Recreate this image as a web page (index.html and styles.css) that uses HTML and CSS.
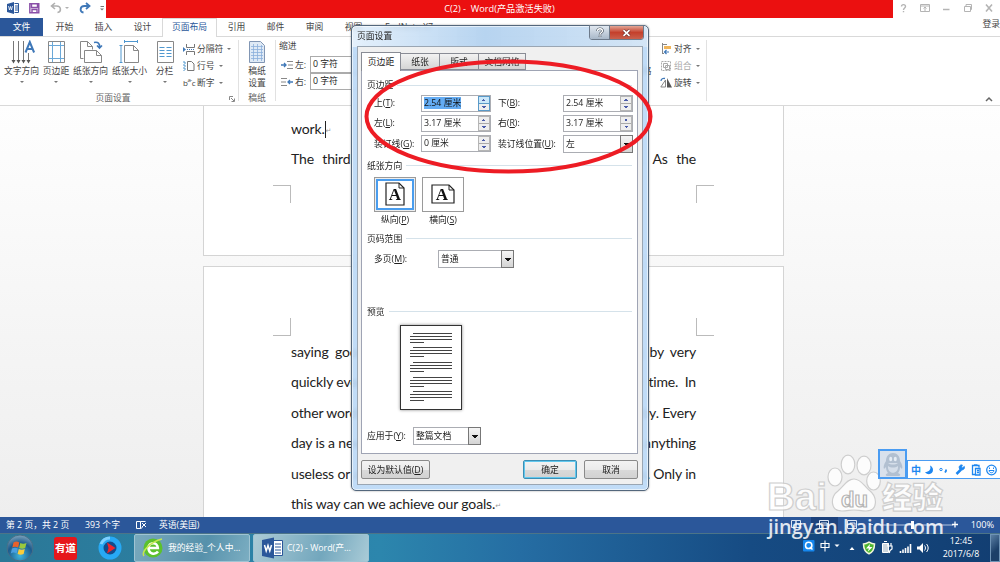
FILE: index.html
```html
<!DOCTYPE html>
<html lang="zh-CN">
<head>
  <meta charset="UTF-8">
  <meta name="viewport" content="width=device-width, initial-scale=1">
  <title>C(2) - Word</title>
  <link rel="stylesheet" href="styles.css">
</head>
<body>
  <header class="title-bar">
    <div class="quick-access">
      <svg width="106" height="18" viewBox="0 0 106 18" fill="none">
        <path d="M7 4l7-2v12l-7-2z" fill="#2b579a"/><path d="M14.500 3.500h4v9h-4M15 6h3M15 8h3M15 10h3" stroke="#2b579a"/>
        <path d="M8.500 6l1 4 1-3.500 1 3.500 1-4" stroke="#fff" stroke-width=".8"/>
        <path d="M29.800 3.800h9v9h-9zM31.500 4v3.500h6V4M32 12.500v-3h5v3" stroke="#8a4fa8" stroke-width="1.400"/>
        <path d="M55 3l-3.500 3 3.500 3M52 6h4.500c5 0 5 6 1 6.500" stroke="#b0b0b0" stroke-width="1.600"/>
        <path d="M65 7h4l-2 2z" fill="#b0b0b0"/>
        <path d="M86 3l3.500 3-3.500 3M89 6h-4.500c-5 0-5 6-1 6.500" stroke="#3f78b8" stroke-width="1.800"/>
        <path d="M100.500 6.500h3.500" stroke="#777"/><path d="M100 8.500h4l-2 2z" fill="#777"/>
      </svg>
    </div>
    <div class="title-text">C(2) -&nbsp; Word(产品激活失败)</div>
    <div class="window-tools">
      <svg width="107" height="18" viewBox="0 0 107 18" fill="none" stroke="#b4b4b4">
        <path d="M8.500 6.500c0-2.500 4-2.500 4 0 0 1.500-2 1.500-2 3.500M10.500 11v1.300" stroke-width="1.400"/>
        <path d="M27.500 4.500h9v7h-9zM27.500 6h9M32 7v4M30.500 8.500L32 7l1.500 1.500"/>
        <path d="M50 9.500h6.500" stroke-width="1.500"/>
        <path d="M71.500 6.500h6v5h-6zM73 6V4.500h5.500v5H78"/>
        <path d="M93 4.500l6 7M99 4.500l-6 7" stroke-width="1.600"/>
      </svg>
    </div>
  </header>

  <nav class="tabs">
    <div class="tab file">文件</div>
    <div class="tab">开始</div>
    <div class="tab">插入</div>
    <div class="tab">设计</div>
    <div class="tab active">页面布局</div>
    <div class="tab">引用</div>
    <div class="tab">邮件</div>
    <div class="tab">审阅</div>
    <div class="tab">视图</div>
    <div class="tab wide">EndNote X7</div>
    <div class="login">登录</div>
  </nav>

  <section class="ribbon">
    <div class="group page-setup">
      <div class="group-body">
        <div class="big-btn w36">
          <svg width="28" height="25" viewBox="0 0 28 25" fill="none">
            <path d="M5.500 1v20M10.500 1v20M15.500 1v20M20.500 13v8" stroke="#777"/>
            <path d="M3.500 20h4l-2 3.500zM8.500 20h4l-2 3.500zM13.500 20h4l-2 3.500zM18.500 20h4l-2 3.500z" fill="#555"/>
            <path d="M17.500 12.500L21.800 2l4.300 10.500M19 9h6" stroke="#3f78b8" stroke-width="2"/>
          </svg>
          <span>文字方向</span><i class="caret"></i>
        </div>
        <div class="big-btn w34">
          <svg width="20" height="25" viewBox="0 0 20 25" fill="none">
            <path d="M2.500 1.500h16v21h-16z" stroke="#888"/>
            <path d="M6.500 2v20M14.500 2v20M3 5.500h15M3 18.500h15" stroke="#6aa8d8"/>
          </svg>
          <span>页边距</span><i class="caret"></i>
        </div>
        <div class="big-btn w36">
          <svg width="26" height="25" viewBox="0 0 26 25" fill="none" stroke="#888">
            <path d="M5.500 18.500h-3v-17h7l5 5v3M9.500 1.500v5h5"/>
            <path d="M6.500 22.500v-12h12l5 5v7zM18.500 10.500v5h5" fill="#fff"/>
            <path d="M16 2.500c4-1 6 1 5.500 5M19 5.500l2.500 2.500L24 5.500" stroke="#3f78b8" stroke-width="1.600"/>
          </svg>
          <span>纸张方向</span><i class="caret"></i>
        </div>
        <div class="big-btn w41">
          <svg width="22" height="25" viewBox="0 0 22 25" fill="none">
            <path d="M5.500 22.500v-17h9l5 5v12zM14.500 5.500v5h5" stroke="#888"/>
            <path d="M5 1.500h14M5.500 0v3M18.500 0v3M2 5v17.500M.5 5.500h3M.5 22.500h3" stroke="#4f97cf"/>
          </svg>
          <span>纸张大小</span><i class="caret"></i>
        </div>
        <div class="big-btn w28">
          <svg width="20" height="25" viewBox="0 0 20 25" fill="none">
            <path d="M2.500 1.500h16v21h-16z" stroke="#888"/>
            <path d="M4.500 7.500h5M4.500 10.500h5M4.500 13.500h5M4.500 16.500h5M11.500 7.500h5M11.500 10.500h5M11.500 13.500h5M11.500 16.500h5" stroke="#4f97cf" stroke-width="1.200"/>
          </svg>
          <span>分栏</span><i class="caret"></i>
        </div>
        <div class="small-list">
          <div>
            <svg width="12" height="12" viewBox="0 0 12 12" fill="none"><path d="M3.500 1v3.500h8V1M3.500 12V8.500h8V12" stroke="#777"/><path d="M0 4v5l3-2.500z" fill="#3f78b8"/><path d="M4 6.500h8" stroke="#3f78b8" stroke-dasharray="1 1"/></svg>
            分隔符<i class="caret"></i>
          </div>
          <div>
            <svg width="12" height="12" viewBox="0 0 12 12" fill="none"><path d="M4.500 1.500h4l2.500 2.500v6.500H4.500z" stroke="#777"/><path d="M1 1v10M2 2v9" stroke="#4f97cf" stroke-dasharray="2 1"/></svg>
            行号<i class="caret"></i>
          </div>
          <div>
            <span class="hyphen">b<sup>a-</sup>c</span>
            断字<i class="caret"></i>
          </div>
        </div>
      </div>
      <div class="group-name">页面设置
        <svg class="launcher" width="6" height="6" viewBox="0 0 6 6" fill="none" stroke="#888"><path d="M.5 4V.5H4M2 2l3 3M5.500 2.500v3h-3"/></svg>
      </div>
    </div>
    <div class="group manuscript">
      <div class="group-body">
        <div class="big-btn two-line">
          <svg width="20" height="25" viewBox="0 0 20 25" fill="none">
            <path d="M2.500 1.500h11l4 4v17h-15z" fill="#dfeaf6" stroke="#8196b4"/>
            <path d="M4 6.500h12M4 9.500h12M4 12.500h12M4 15.500h12M4 18.500h12M6.500 4v17M10.500 4v17M14.500 5v16" stroke="#8bb0dc" stroke-width=".8"/>
          </svg>
          <span>稿纸<br>设置</span>
        </div>
      </div>
      <div class="group-name">稿纸</div>
    </div>
    <div class="group indent">
      <div>缩进</div>
      <div class="indent-row">
        <svg width="12" height="10" viewBox="0 0 12 10" fill="none"><path d="M6 1.500h6M7 5h5M6 8.500h6" stroke="#888"/><path d="M0 5h5M3 3l2 2-2 2" stroke="#3f78b8" stroke-width="1.300"/></svg>
        左:<span class="field">0 字符</span>
      </div>
      <div class="indent-row">
        <svg width="12" height="10" viewBox="0 0 12 10" fill="none"><path d="M0 1.500h6M0 5h5M0 8.500h6" stroke="#888"/><path d="M12 5H7M9 3L7 5l2 2" stroke="#3f78b8" stroke-width="1.300"/></svg>
        右:<span class="field">0 字符</span>
      </div>
    </div>
    <div class="group arrange">
      <div class="pane-label">窗格</div>
      <div class="small-list">
        <div>
          <svg width="12" height="12" viewBox="0 0 12 12" fill="none"><path d="M2.500 0v11M2 1.500h5M2 10.500h2" stroke="#888"/><path d="M4 3h7v3H4z" fill="#f0b55a"/><path d="M9 9H4.500M6.500 7l-2 2 2 2" stroke="#3f78b8" stroke-width="1.200"/></svg>
          对齐<i class="caret"></i>
        </div>
        <div class="disabled">
          <svg width="12" height="12" viewBox="0 0 12 12" fill="none" stroke="#aaa"><path d="M1.500 1.500h9v9h-9z" stroke-dasharray="2 1"/><path d="M3.500 3.500h4v4h-4zM5.500 5.500h4v4h-4z"/></svg>
          组合<i class="caret"></i>
        </div>
        <div>
          <svg width="12" height="12" viewBox="0 0 12 12" fill="none"><path d="M5.500 3v7H.8z" stroke="#888"/><path d="M7 1v9.500h5z" fill="#555"/><path d="M1 4c0-2 2-3 4-2.500" stroke="#3f78b8" stroke-width="1.300"/></svg>
          旋转<i class="caret"></i>
        </div>
      </div>
    </div>
    <svg class="collapse" width="8" height="6" viewBox="0 0 8 6" fill="none" stroke="#666" stroke-width="1.500"><path d="M1 5l3-3 3 3"/></svg>
  </section>

  <main class="workspace">
    <article class="page first">
      <p class="line">work.<span class="cursor"></span><span class="mark">↵</span></p>
      <p class="line loose"><span>The third</span><span>. As the</span></p>
      <div class="corners bottom"><i></i><i></i></div>
    </article>
    <article class="page second">
      <div class="corners top"><i></i><i></i></div>
      <p class="line mid"><span>saying good</span><span>g by very</span></p>
      <p class="line"><span>quickly even</span><span class="gap">r time. In</span></p>
      <p class="line"><span>other words</span><span>by. Every</span></p>
      <p class="line"><span>day is a new</span><span>anything</span></p>
      <p class="line"><span>useless or a</span><span>s. Only in</span></p>
      <p class="line">this way can we achieve our goals.<span class="mark">↵</span></p>
    </article>
  </main>

  <footer class="status-bar">
    <span class="pages">第 2 页，共 2 页</span>
    <span class="words">393 个字</span>
    <svg class="proof" width="12" height="10" viewBox="0 0 12 10" fill="none" stroke="#fff"><path d="M5.500 1.500h-4v7h4zM5.500 1.500h5M5.500 8.500l2-1M7 3l4 4M11 3L7 7"/></svg>
    <span>英语(美国)</span>
    <div class="zoom-tools">
      <svg width="170" height="16" viewBox="0 0 170 16" fill="none" stroke="#dbe5f3">
        <path d="M20 0h27v16H20z" fill="#1d427c" stroke="none"/>
        <path d="M.5 3.500H5v7H.5zM5 3.500h4.500v7H5zM28.500 3.500h9v8h-9zM30 6h6M30 8h6M56.500 3.500h9v8h-9zM59 6h5v4"/>
        <path d="M78 7.500h4M84 8h78" stroke="#b5c6df"/>
        <path d="M120 4h3v8h-3z" fill="#fff" stroke="none"/>
        <path d="M161 7.500h6M164 4.500v6" stroke="#fff" stroke-width="1.300"/>
      </svg>
      <span>100%</span>
    </div>
  </footer>

  <div class="taskbar">
    <svg class="start" width="28" height="28" viewBox="0 0 28 28">
      <defs><radialGradient id="orb" cx=".5" cy=".8" r=".8"><stop offset="0" stop-color="#3fb4dc"/><stop offset=".6" stop-color="#1c5a8c"/><stop offset="1" stop-color="#7fa4bd"/></radialGradient></defs>
      <circle cx="14" cy="14" r="13" fill="url(#orb)" stroke="#476f88"/>
      <path d="M7.500 8.500c2-1.200 4-1.200 5.800 0l-1.200 5c-2-1-4-1-5.800 0z" fill="#e8622c"/>
      <path d="M14.300 9c2 1 4 1 6.200 0l-1.300 5c-2 1-4 1-6 0z" fill="#9ac83c"/>
      <path d="M6 14.500c2-1 4-1 5.800 0l-1.200 5c-2-1.200-4-1.200-5.800 0z" fill="#4a9fe0"/>
      <path d="M12.800 15c2 1 4 1 6 0l-1.200 5c-2 1-4 1-6 0z" fill="#fbcc3a"/>
    </svg>
    <div class="youdao">有道</div>
    <svg class="player" width="24" height="24" viewBox="0 0 24 24"><circle cx="12" cy="12" r="9" fill="#124c8c" stroke="#27a9f5" stroke-width="5"/><path d="M3 8a10 10 0 0 1 9-6" stroke="#7fd0ff" stroke-width="3" fill="none"/><path d="M9 6.500l8.500 5.500L9 17.500l1.500-5.500z" fill="#f0252d"/></svg>
    <div class="task">
      <svg width="22" height="24" viewBox="0 0 22 24" fill="none"><circle cx="11" cy="12" r="9.500" fill="#5cc12c"/><path d="M16 15.500c-3 4-9.500 2.500-9.500-3.500S15.500 5.500 15.800 12H7" stroke="#fff" stroke-width="2.600"/><path d="M2 20c-3-4 6-14 18-17" stroke="#c4e84f" stroke-width="1.500"/></svg>
      <span>我的经验_个人中...</span>
    </div>
    <div class="task current">
      <svg width="23" height="22" viewBox="0 0 23 22" fill="none"><path d="M12 3.500h9.500v15H12" fill="#fff" stroke="#2b579a"/><path d="M14 7h6M14 10h6M14 13h6M14 16h6" stroke="#2b579a"/><path d="M1 3l12-2.500v21L1 19z" fill="#2b579a"/><path d="M3.500 8l1.700 6L7 8.500 8.800 14l1.700-6" stroke="#fff" stroke-width="1.500"/></svg>
      <span>C(2) - Word(产...</span>
    </div>
    <div class="tray">
      <svg width="130" height="20" viewBox="0 0 130 20" fill="none">
        <rect x="1" y="2" width="11.500" height="11.500" rx="1" fill="#1687ee"/><circle cx="6.700" cy="7.400" r="3.200" stroke="#fff" stroke-width="1.500"/><path d="M8 9l2.500 2.500" stroke="#fff" stroke-width="1.500"/>
        <path d="M19 5.500h8v4h-8zM23 2.500v11" stroke="#fff" stroke-width="1.100"/>
        <path d="M32.500 6.500h5l-2.500 2.500zM47.500 12h5l-2.500-3z" fill="#fff"/>
        <path d="M61.500 6c3 0 4-1 5.500-2 1.500 1 2.500 2 5.500 2 0 5-1.500 8-5.500 9.800C63 14 61.500 11 61.500 6z" fill="#4cb52e" stroke="#f2f6dc" stroke-width="1.500"/><path d="M68 6l-4 4.500h3l-1.500 3.500 5-5h-3z" fill="#fff"/>
        <path d="M80.500 5.500h6v9h-6zM82 3.500h3" fill="#cdd7df" stroke="#fff"/><path d="M85 8h5v3c-2 1-3 2-2.500 4M86 8V5M89 8V5" stroke="#fff" stroke-width="1.200"/>
        <path d="M98.500 15v-2M101 15v-3.500M103.500 15v-5M106 15V8.500M108.500 15V6" stroke="#fff" stroke-width="1.600"/>
        <path d="M115 8.500h2.500L121 5v10l-3.500-3.500H115z" fill="#fff"/><path d="M122.500 7.500c1.300 1.500 1.300 3.500 0 5M124.500 6c2.200 2.500 2.200 5.500 0 8" stroke="#fff"/>
      </svg>
    </div>
    <div class="clock">12:45<br>2017/6/8</div>
    <div class="show-desktop"></div>
  </div>

  <div class="dialog">
    <div class="dialog-title">页面设置</div>
    <div class="dialog-controls">
      <div class="help"><svg width="20" height="13" viewBox="0 0 20 13" fill="none"><path d="M7.500 5c0-3 5-3 5 0 0 1.500-2.500 1.500-2.500 3.500M10 9.500v1.500" stroke="#4a5560" stroke-width="2.600"/><path d="M7.500 5c0-3 5-3 5 0 0 1.500-2.500 1.500-2.500 3.500M10 9.500v1.300" stroke="#fff" stroke-width="1.300"/></svg></div>
      <div class="close"><svg width="9" height="8" viewBox="0 0 9 8"><path d="M1.500 1.200l6 5.600M7.500 1.200l-6 5.600" stroke="#6b3030" stroke-width="3"/><path d="M1.500 1.200l6 5.600M7.500 1.200l-6 5.600" stroke="#fff" stroke-width="1.700"/></svg></div>
    </div>
    <div class="dialog-body">
      <div class="dialog-tabs">
        <div class="dtab on">页边距</div>
        <div class="dtab">纸张</div>
        <div class="dtab">版式</div>
        <div class="dtab last">文档网格</div>
      </div>
      <div class="panel">
        <div class="legend">页边距</div>
        <div class="margins">
          <label>上(<u>T</u>):</label>
          <div class="spin focus"><span><mark>2.54 厘米</mark></span><b></b></div>
          <label>下(<u>B</u>):</label>
          <div class="spin"><span>2.54 厘米</span><b></b></div>
          <label>左(<u>L</u>):</label>
          <div class="spin"><span>3.17 厘米</span><b></b></div>
          <label>右(<u>R</u>):</label>
          <div class="spin"><span>3.17 厘米</span><b></b></div>
          <label>装订线(<u>G</u>):</label>
          <div class="spin"><span>0 厘米</span><b></b></div>
          <label>装订线位置(<u>U</u>):</label>
          <div class="select"><span>左</span><b></b></div>
        </div>
        <div class="legend orientation-legend">纸张方向</div>
        <div class="orientation">
          <div>
            <div class="orient-box selected">
              <svg width="20" height="24" viewBox="0 0 20 24"><path d="M1 1h13l5 5v17H1z" fill="#fff" stroke="#222" stroke-width="1.200"/><path d="M14 1v5h5" fill="none" stroke="#222"/><text x="10" y="18" text-anchor="middle">A</text></svg>
            </div>
            <span>纵向(<u>P</u>)</span>
          </div>
          <div>
            <div class="orient-box">
              <svg width="24" height="20" viewBox="0 0 24 20"><path d="M1 1h17l5 5v13H1z" fill="#fff" stroke="#222" stroke-width="1.200"/><path d="M18 1v5h5" fill="none" stroke="#222"/><text x="11" y="15.500" text-anchor="middle">A</text></svg>
            </div>
            <span>横向(<u>S</u>)</span>
          </div>
        </div>
        <div class="legend">页码范围</div>
        <div class="multi-page">
          <label>多页(<u>M</u>):</label>
          <div class="select"><span>普通</span><b></b></div>
        </div>
        <div class="legend preview-legend">预览</div>
        <div class="preview">
          <div class="para"><i></i><i></i><i></i><i></i></div>
          <div class="para"><i></i><i></i><i></i><i></i></div>
          <div class="para"><i></i><i></i><i></i><i></i></div>
          <div class="para"><i></i><i></i><i></i><i></i></div>
          <div class="para"><i></i><i></i><i></i><i></i></div>
        </div>
        <div class="apply">
          <label>应用于(<u>Y</u>):</label>
          <div class="select"><span>整篇文档</span><b></b></div>
        </div>
      </div>
      <div class="buttons">
        <button class="default-btn">设为默认值(<u>D</u>)</button>
        <button class="ok">确定</button>
        <button>取消</button>
      </div>
    </div>
  </div>

  <svg class="annotation" width="300" height="124" viewBox="0 0 300 124"><ellipse cx="148.500" cy="61.500" rx="142" ry="55" fill="none" stroke="#ed1c24" stroke-width="4"/></svg>

  <svg class="watermark" width="190" height="90" viewBox="0 0 190 90">
    <g fill="#fff" stroke="#c9c9c9" stroke-width="1.200">
      <ellipse cx="95" cy="29" rx="7" ry="9"/>
      <ellipse cx="108" cy="16.500" rx="6.800" ry="9.300"/>
      <ellipse cx="124" cy="17.500" rx="7" ry="9.300"/>
      <ellipse cx="133.500" cy="33" rx="6.800" ry="9"/>
      <path d="M114 31c7 0 10 7 15 11 9 7 9 21-3 21-5 0-8-1-12-1s-7 1-12 1c-12 0-12-14-4-20 6-5 9-12 16-12z"/>
      <text class="bai" x="27" y="62" textLength="60" lengthAdjust="spacingAndGlyphs">Bai</text>
      <text class="jy" x="142" y="60" textLength="61" lengthAdjust="spacingAndGlyphs">经验</text>
      <text class="du" x="101" y="59">du</text>
    </g>
    <text class="url" x="28" y="86" textLength="176" lengthAdjust="spacingAndGlyphs">jingyan.baidu.com</text>
  </svg>

  <div class="ime">
    <div class="penguin">
      <svg width="24" height="26" viewBox="0 0 24 26"><path d="M12 1c4 0 7 3 7 8 2 3 3 6 2 8l-2-2c0 3-1 5-2 6 3 1 3 3 0 3h-10c-3 0-3-2 0-3-1-1-2-3-2-6l-2 2c-1-2 0-5 2-8 0-5 3-8 7-8z" fill="#b2c0d1"/><ellipse cx="9.700" cy="7" rx="1.500" ry="2.200" fill="#e6edf5"/><ellipse cx="14.300" cy="7" rx="1.500" ry="2.200" fill="#e6edf5"/><path d="M7 11c3 2 7 2 10 0M7 14c-1 9 11 9 10 0-3 2-7 2-10 0z" fill="#d5deea"/></svg>
    </div>
    <div class="ime-bar">
      <span>中</span>
      <svg width="82" height="16" viewBox="0 0 82 16" fill="none" stroke="#1e87f0">
        <path d="M9 3.500c1.500 4-1 6.500-5 6.500 3 4 8 2 8-2 0-2-1-3.500-3-4.500z" fill="#1e87f0" stroke="none"/>
        <circle cx="20" cy="7.500" r="1.200"/><path d="M25 7.500v1.500l-1 1.500" stroke-width="1.800"/>
        <path d="M35.500 12l4.500-4.500" stroke-width="2.500"/><path d="M43.300 4.500c1 3-3 4.500-4.500 2.500s0-4.500 2.500-4L40.500 5l1 1z" fill="#1e87f0"/>
        <path d="M54 12.500h-2.500v-9H58v2M53 3h3.500M54.500 6.500h4.500v6.500h-4.500zM56 8.500h2M56 10.500h2" stroke-width="1.300"/>
        <circle cx="70.500" cy="8" r="4.800" stroke-width="1.300"/><path d="M68 8.500c.5 3 4.500 3 5 0zM68.500 5.500v1.500M72.500 5.500v1.500"/>
      </svg>
    </div>
  </div>
</body>
</html>
```
FILE: styles.css
```css
* {
  box-sizing: border-box;
  margin: 0;
  padding: 0;
}

body {
  width: 1000px;
  height: 562px;
  overflow: hidden;
  position: relative;
  display: flex;
  flex-direction: column;
  background: #fff;
  color: #444;
  font-family: "Open Sans", "Noto Sans CJK SC", sans-serif;
  font-size: 8.8px;
  line-height: 12px;
  white-space: nowrap;
}

svg {
  display: block;
  flex: none;
}

i {
  font-style: normal;
}

/* title bar */
.title-bar {
  height: 18px;
  display: flex;
}

.quick-access {
  width: 106px;
}

.title-text {
  flex: 1;
  background: #eb1010;
  color: #fff;
  text-align: center;
  line-height: 17px;
  font-size: 9.2px;
}

.window-tools {
  width: 107px;
}

/* tabs */
.tabs {
  height: 19px;
  display: flex;
  border-bottom: 1px solid #d9d9d9;
}

.tab {
  width: 39px;
  text-align: center;
  line-height: 18px;
}

.tab.file {
  width: 43px;
  height: 18px;
  margin-right: 2px;
  background: #2b579a;
  color: #fff;
}

.tab.active {
  width: 55px;
  height: 19px;
  border: 1px solid #d9d9d9;
  border-bottom: none;
  background: #fff;
  color: #2b579a;
  line-height: 17px;
}

.tab.wide {
  width: 72px;
}

.login {
  margin-left: auto;
  line-height: 13px;
}

/* ribbon */
.ribbon {
  position: relative;
  height: 69px;
  display: flex;
  border-bottom: 1px solid #d9d9d9;
}

.group {
  margin: 3px 0 4px;
  border-right: 1px solid #e1e1e1;
}

.group-body {
  height: 52px;
  display: flex;
}

.page-setup {
  width: 239px;
  padding-left: 4px;
}

.manuscript {
  width: 37px;
}

.group-name {
  position: relative;
  text-align: center;
  color: #666;
  line-height: 13px;
}

.page-setup .group-name {
  padding-right: 16px;
}

.launcher {
  position: absolute;
  right: 3px;
  top: 4px;
}

.big-btn {
  display: flex;
  flex-direction: column;
  align-items: center;
}

.big-btn span {
  line-height: 12px;
  text-align: center;
}

.w36 { width: 35px; }
.w34 { width: 34px; }
.w41 { width: 43px; }
.w28 { width: 27px; }

.caret {
  display: inline-block;
  border: 2px solid transparent;
  border-top-color: #777;
  border-bottom: none;
}

.big-btn .caret {
  margin-top: 4px;
}

.two-line {
  width: 36px;
}

.small-list div {
  height: 17px;
  display: flex;
  align-items: center;
  gap: 2px;
}

.small-list .caret {
  margin-left: 2px;
}

.page-setup .small-list {
  margin-left: 5px;
}

.hyphen {
  font-size: 8px;
  width: 12px;
  letter-spacing: -.5px;
}

.hyphen sup {
  font-size: 6px;
  line-height: 1px;
}

.indent {
  width: 364px;
  padding-left: 3px;
  border: none;
}

.indent > div:first-child {
  height: 16px;
  line-height: 13px;
}

.indent-row {
  display: flex;
  align-items: center;
  height: 17px;
  margin-left: 2px;
  gap: 2px;
}

.field {
  width: 60px;
  height: 17px;
  margin-left: auto;
  margin-right: 270px;
  padding-left: 2px;
  border: 1px solid #ababab;
  line-height: 15px;
  color: #222;
}

.arrange {
  display: flex;
  width: 67px;
}

.pane-label {
  width: 18px;
  margin-top: 25px;
  margin-left: -6px;
}

.arrange .small-list {
  margin-left: 8px;
}

.disabled {
  color: #aaa;
}

.collapse {
  position: absolute;
  right: 7px;
  bottom: 3px;
}

/* document */
.workspace {
  height: 411px;
  overflow: hidden;
  display: flex;
  flex-direction: column;
  align-items: center;
  gap: 10px;
  padding-right: 13px;
  background: linear-gradient(#fefefe, #eee);
}

.page {
  width: 581px;
  flex: none;
  padding: 0 87px;
  background: #fff;
  border: 1px solid #d4d4d4;
  color: #222;
  font-family: Lato, Carlito, sans-serif;
  font-size: 14px;
  letter-spacing: -.15px;
}

.page.first {
  height: 150px;
  border-top: none;
  padding-top: 8px;
}

.page.second {
  height: 300px;
}

.line {
  height: 30.4px;
  line-height: 30px;
  display: flex;
}

.line span:nth-child(2):not(.mark) {
  margin-left: auto;
}

.loose {
  word-spacing: 5px;
}

.mid,
.gap {
  word-spacing: 3px;
}

.cursor {
  width: 1px;
  height: 17px;
  margin-top: 7px;
  background: #222;
}

.mark {
  color: #999;
  font: 7px/34px "DejaVu Sans", sans-serif;
}

.corners {
  display: flex;
  justify-content: space-between;
  margin: 0 -18px;
}

.corners i {
  width: 18px;
  height: 18px;
  border: 0 solid #bbb;
}

.bottom {
  margin-top: 10px;
}

.bottom i {
  border-top-width: 1px;
}

.top {
  padding: 51px 0 1px;
}

.top i {
  border-bottom-width: 1px;
}

.corners i:first-child {
  border-right-width: 1px;
}

.corners i:last-child {
  border-left-width: 1px;
}

/* status bar */
.status-bar {
  height: 16px;
  display: flex;
  align-items: center;
  padding: 0 6px;
  background: #2b579a;
  color: #fff;
}

.pages {
  width: 79px;
}

.words {
  width: 50px;
}

.proof {
  margin-right: 12px;
}

.zoom-tools {
  display: flex;
  align-items: center;
  gap: 10px;
  margin-left: auto;
}

.zoom-tools span {
  font-size: 9.2px;
}

/* taskbar */
.taskbar {
  height: 29px;
  display: flex;
  align-items: center;
  padding-left: 6px;
  border-top: 1px solid #4c7488;
  background: linear-gradient(90deg, #2b7897, #2c86ad 38%, #256da3 52%, #164b83 75%, #123e72);
  color: #fff;
}

.youdao {
  width: 23px;
  height: 23px;
  margin-left: 20px;
  border-radius: 3px;
  background: #e6171b;
  font-size: 10.5px;
  font-weight: bold;
  line-height: 23px;
  text-align: center;
}

.player {
  margin: 0 12px 0 21px;
}

.task {
  width: 116px;
  height: 28px;
  display: flex;
  align-items: center;
  gap: 4px;
  padding-left: 7px;
  margin-right: 3px;
  border: 1px solid #9fc4d3;
  border-radius: 2px;
  background: linear-gradient(110deg, #79a9bd, #5691ab 60%, #7caec2);
}

.task.current {
  gap: 3px;
  background: linear-gradient(110deg, #abcad5, #73a7bd 60%, #a9cbd7);
}

.tray {
  margin-left: auto;
}

.clock {
  width: 58px;
  text-align: center;
  line-height: 13px;
}

.show-desktop {
  width: 10px;
  height: 28px;
  border: 1px solid #6f93b5;
  background: linear-gradient(135deg, #5b7fa4, #1c3f68 60%);
}

/* page setup dialog */
.dialog {
  position: absolute;
  left: 351px;
  top: 25px;
  width: 298px;
  height: 466px;
  padding: 0 5px 5px;
  border: 1px solid #54677c;
  border-radius: 5px;
  background: linear-gradient(90deg, rgba(224, 238, 251, .85), rgba(173, 206, 238, .88) 45%, rgba(205, 225, 244, .86)) 0 0 / 100% 21px no-repeat, linear-gradient(rgba(184, 215, 246, .88), rgba(184, 215, 246, .88)) 0 21px no-repeat;
  backdrop-filter: blur(2px);
  box-shadow: inset 0 0 0 1px rgba(255, 255, 255, .6), 0 0 2px rgba(0, 0, 0, .4);
  color: #222;
}

.dialog-title {
  height: 20px;
  line-height: 20px;
}

.dialog-controls {
  position: absolute;
  right: 4px;
  top: -1px;
  display: flex;
  height: 15px;
  border: 1px solid #6d7a8a;
  border-radius: 0 0 3px 3px;
  overflow: hidden;
}

.help {
  width: 20px;
  background: linear-gradient(#e1e8f0, #a9b8c9);
  border-right: 1px solid #6d7a8a;
}

.close {
  width: 33px;
  padding: 3px 12px;
  background: linear-gradient(#e3a595, #c4402c 50%, #c9604c);
}

.dialog-body {
  height: 439px;
  padding: 5px 3px;
  border: 1px solid #9aa6b3;
  background: #f0f0f0;
}

.dialog-tabs {
  display: flex;
  align-items: flex-end;
  height: 18px;
}

.dtab {
  width: 39px;
  height: 17px;
  border: 1px solid #898c95;
  border-left: none;
  background: linear-gradient(#f2f2f2, #d5d5d5);
  text-align: center;
  line-height: 16px;
}

.dtab.on {
  position: relative;
  width: 40px;
  height: 19px;
  margin-bottom: -1px;
  border-left: 1px solid #898c95;
  border-bottom: none;
  background: #fff;
  line-height: 18px;
}

.dtab.last {
  width: 47px;
}

.panel {
  height: 384px;
  width: 277px;
  padding: 7px 5px 0;
  border: 1px solid #9fa4b4;
  background: #fff;
}

.legend {
  display: flex;
  align-items: center;
  gap: 4px;
  height: 14px;
}

.legend::after {
  content: "";
  flex: 1;
  border-top: 1px solid #d5e2ea;
}

.margins {
  display: grid;
  grid-template-columns: 47px 77px 65px 70px;
  grid-auto-rows: 20.3px;
  align-items: center;
  margin: 1px 0 0 7px;
}

.spin {
  width: 70px;
  height: 17px;
  display: flex;
  justify-content: space-between;
  border: 1px solid #abadb3;
  padding: 1px 0 0 2px;
  line-height: 13px;
}

.spin mark {
  background: #64acf3;
  color: #111;
}

.spin b {
  width: 12px;
  height: 15px;
  margin-top: -1px;
  border: 1px solid #b5b5b5;
  background:
    conic-gradient(from 135deg at 50% 0, #4a5ba8 90deg, transparent 0) 50% 2px / 4px 2px no-repeat,
    conic-gradient(from -45deg at 50% 100%, #4a5ba8 90deg, transparent 0) 50% 9px / 4px 2px no-repeat,
    linear-gradient(#eee 6px, #aaa 6px, #aaa 7px, #eee 7px);
}

.spin.focus b {
  border-color: #5a9ac8;
  background:
    conic-gradient(from 135deg at 50% 0, #4a5ba8 90deg, transparent 0) 50% 2px / 4px 2px no-repeat,
    conic-gradient(from -45deg at 50% 100%, #4a5ba8 90deg, transparent 0) 50% 9px / 4px 2px no-repeat,
    linear-gradient(#cbe8fa 6px, #5a9ac8 6px, #5a9ac8 7px, #eee 7px);
}

.select {
  height: 18px;
  display: flex;
  justify-content: space-between;
  border: 1px solid #abadb3;
  padding-left: 2px;
  line-height: 16px;
}

.select b {
  width: 13px;
  height: 18px;
  margin: -1px -1px 0 0;
  border: 1px solid #777;
  background:
    conic-gradient(from -45deg at 50% 100%, #111 90deg, transparent 0) 50% 7px / 6px 3px no-repeat,
    linear-gradient(#f5f5f5, #d4d4d4);
}

.orientation-legend {
  margin-top: 5px;
}

.orientation {
  display: flex;
  gap: 6px;
  margin: 4px 0 6px 7px;
  height: 49px;
  text-align: center;
}

.orient-box {
  width: 42px;
  height: 35px;
  display: flex;
  align-items: center;
  justify-content: center;
  border: 1px solid #9a9a9a;
  margin-bottom: 2px;
}

.orient-box.selected {
  box-shadow: inset 0 0 0 1px #eee, inset 0 0 0 3px #4a9dee;
}

.orient-box text {
  font: bold 17px "Liberation Serif", serif;
  fill: #111;
}

.multi-page {
  display: flex;
  align-items: center;
  height: 18px;
  margin: 4px 0 0 7px;
}

.multi-page label {
  width: 64px;
}

.multi-page .select {
  width: 76px;
}

.preview-legend {
  margin-top: 37px;
}

.preview {
  width: 62px;
  height: 85px;
  margin: 6px 0 0 33px;
  padding: 7px 9px;
  border: 1px solid #333;
  box-shadow: 0 0 3px #888;
}

.para {
  height: 14.6px;
  display: flex;
  flex-direction: column;
  gap: 2px;
}

.para i {
  height: 1px;
  background: #444;
}

.para i:first-child {
  margin-left: 3px;
}

.para i:last-child {
  width: 14px;
}

.apply {
  display: flex;
  align-items: center;
  margin-top: 17px;
}

.apply label {
  width: 46px;
}

.apply .select {
  width: 68px;
}

.buttons {
  display: flex;
  gap: 7px;
  margin-top: 6px;
  width: 277px;
}

button {
  width: 54px;
  height: 19px;
  border: 1px solid #8a8a8a;
  border-radius: 2px;
  background: linear-gradient(#f3f3f3, #ebebeb 50%, #dadada 50%, #d2d2d2);
  color: #222;
  font: inherit;
}

.default-btn {
  width: 69px;
  margin-right: auto;
}

.ok {
  border-color: #3c8fb5;
  box-shadow: inset 0 0 0 1px #62c8ee;
}

/* overlays */
.annotation {
  position: absolute;
  left: 360px;
  top: 55px;
}

.watermark {
  position: absolute;
  left: 740px;
  top: 448px;
  overflow: visible;
  opacity: .85;
}

.bai {
  font: bold 38px "Liberation Sans", sans-serif;
}

.jy {
  font: 900 30px "Noto Sans CJK SC", sans-serif;
}

.du {
  font: bold 22px "Liberation Sans", sans-serif;
  stroke: #aaa;
}

.url {
  font: 600 20px "Open Sans", sans-serif;
  fill: #fff;
}

.ime {
  position: absolute;
  left: 878px;
  top: 449px;
  width: 122px;
  height: 30px;
  display: flex;
  align-items: flex-end;
}

.penguin {
  width: 29px;
  height: 30px;
  padding: 2px 1px;
  border: 2px solid #4a9cf2;
  background: #d9e1ec;
}

.penguin svg {
  margin-top: -1px;
}

.ime-bar {
  flex: 1;
  height: 19px;
  display: flex;
  align-items: center;
  padding-left: 3px;
  border: 1px solid #4a9cf2;
  border-right: none;
  background: #fff;
  color: #1e87f0;
  font-size: 10px;
  font-weight: bold;
}
```
